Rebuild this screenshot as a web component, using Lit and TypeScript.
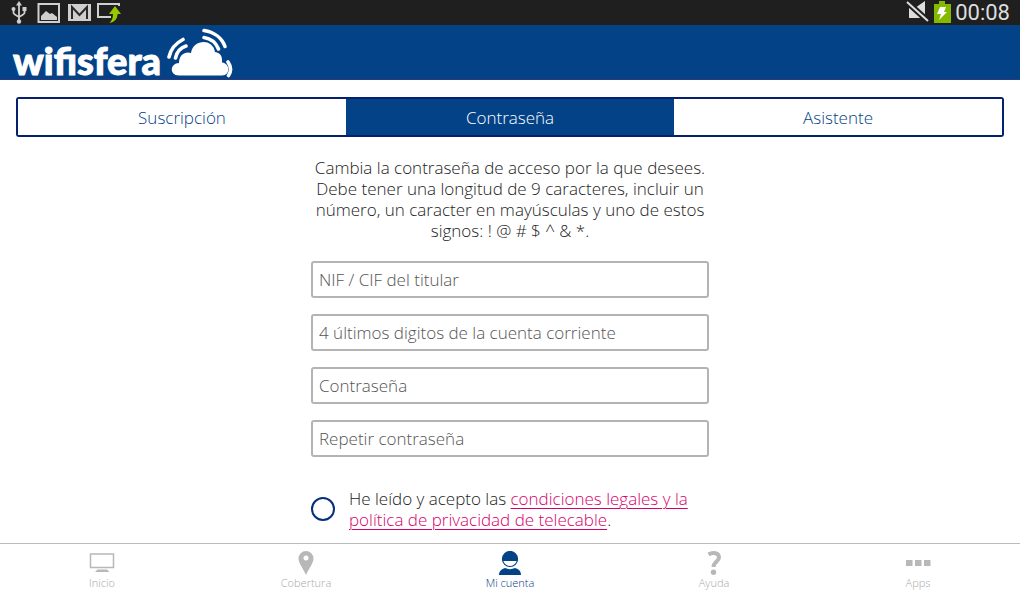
import { LitElement, html, css, svg } from "lit";
import { customElement, state } from "lit/decorators.js";
import { classMap } from "lit/directives/class-map.js";

const icons = {
  inicio: svg`<path fill="none" stroke="currentColor" stroke-width="1.500" d="M2.500 3h23v13.500h-23z"/><path d="M9.500 18.500h9.500l2.500 2.500H7z" fill="currentColor"/>`,
  cobertura: svg`<path fill="currentColor" fill-rule="evenodd" d="M14 0a7.500 7.500 0 0 1 7.500 7.500C21.500 12 17 17.500 14 24C11 17.500 6.500 12 6.500 7.500A7.500 7.500 0 0 1 14 0zM14 4.500a2.500 2.500 0 1 0 0 5a2.500 2.500 0 1 0 0-5z"/>`,
  cuenta: svg`<circle cx="14" cy="8" r="7.500" fill="none" stroke="currentColor" stroke-width="1.200"/><path fill="currentColor" d="M6.500 10V8a7.500 7.500 0 0 1 15 0v2zM3 24c0-3.500 2.500-6 6-7c3 1.500 7 1.500 10 0c4 1 6 3.500 6 7z"/><path fill="#fff" d="M8.500 10h11c-.8 6-10.200 6-11 0z"/>`,
  ayuda: svg`<path fill="none" stroke="currentColor" stroke-width="4" d="M8.500 3.500C13 .8 19 2 19 6.500c0 4-5.500 4-5.500 9.500"/><circle cx="13.500" cy="21.300" r="2.700" fill="currentColor"/>`,
  apps: svg`<path fill="currentColor" d="M2 9h6.500v6H2zM11 9h6.500v6H11zM20 9h6.500v6H20z"/>`,
};

@customElement("status-bar")
class StatusBar extends LitElement {
  static styles = css`
    :host { display: flex; justify-content: space-between; height: 25px; padding: 0 10px; background: #1f1f1f; }
    svg { display: block; }
    .side { display: flex; align-items: center; }
    .time { margin-left: 4px; font: 22px/25px Roboto, sans-serif; color: #ddd; }
  `;
  render() {
    return html`
      <div class="side">
        <svg width="112" height="25" aria-hidden="true">
          <path fill="none" stroke="#cfcfcf" stroke-width="1.800" d="M9 4v18M3.500 9v4q0 1 5.500 4M14.500 9v4q0 1-5.500 4"/>
          <path fill="#cfcfcf" d="M9 1l3 4.500H6zM12.500 7h4v4h-4z"/>
          <circle cx="3.500" cy="9" r="2" fill="#cfcfcf"/><circle cx="9" cy="21.500" r="2.200" fill="#cfcfcf"/>
          <rect x="28.500" y="4" width="20.500" height="18" fill="none" stroke="#cfcfcf" stroke-width="2"/>
          <path fill="#cfcfcf" d="M31 20v-4l5-5 4 3 2-1 5 4v3z"/>
          <path fill="#cfcfcf" d="M58 4h23v17H58z"/>
          <path fill="none" stroke="#2a2a2a" stroke-width="2" d="M62 19V7l7.500 8L77 7v12"/>
          <path fill="none" stroke="#cfcfcf" stroke-width="2" d="M101 17H88V4h21v2"/>
          <path fill="#96c800" d="M105 6l6 8h-3.500c0 5-3 8-8 9c2.500-2.500 3.500-5 3.500-9H99z"/>
        </svg>
      </div>
      <div class="side">
        <svg width="46" height="25" aria-hidden="true">
          <path fill="#ddd" d="M4 8h6l10-7v17H4z"/>
          <path stroke="#1f1f1f" stroke-width="6" d="M2 2l21 19"/>
          <path stroke="#ddd" stroke-width="2" d="M2 2l21 19"/>
          <path fill="#84b900" d="M29 4h5V1h6v3h6v19H29z"/>
          <path fill="#fff" d="M35 7h6l-2 5h3l-8 8 2-6h-4z"/>
        </svg>
        <time class="time">00:08</time>
      </div>`;
  }
}

@customElement("brand-header")
class BrandHeader extends LitElement {
  static styles = css`
    :host { display: flex; align-items: center; gap: 6px; box-sizing: border-box; height: 55px; padding: 0 13px; background: #044288; border-bottom: 1px solid #2b3a7c; color: #fff; }
    .name { padding-top: 16px; font: 900 38px/38px Lato, sans-serif; -webkit-text-stroke: 1px #fff; }
    svg { display: block; }
  `;
  render() {
    return html`
      <span class="name">wifisfera</span>
      <svg width="68" height="52" viewBox="0 0 68 52" aria-hidden="true">
        <path fill="currentColor" d="M12 49.500C2 49.500 3 37 12 37C12 28 19 25 24 27C26 13 46 12 48 26C54 27 55.500 31 55 36.500C63 37 64 49.500 55 49.500z"/>
        <g fill="none" stroke="currentColor" stroke-width="3.600" stroke-linecap="round">
          <path d="M2 31C4 22 9 17 16 13.500M8.500 32C10 25.500 14 21.500 19 20"/>
          <path d="M37 4.500C47 6 55 12 58 20.500M37 11.500C44 12.500 49 17 51.500 23"/>
          <path d="M61 36C64.500 41 64.500 45 61.500 49.500"/>
        </g>
      </svg>`;
  }
}

@customElement("option-tabs")
class OptionTabs extends LitElement {
  @state() selected = 1;
  static styles = css`
    :host { display: block; padding: 17px 16px 0; }
    .tabs { display: grid; grid-template-columns: repeat(3, 1fr); box-sizing: border-box; height: 40px; border: 2px solid #04206e; border-radius: 3px; }
    .tab { border: 0; padding: 0; background: #fff; color: #044288; font: 300 17px/21px "Open Sans", sans-serif; }
    .selected { background: #044288; color: #fff; }
  `;
  render() {
    return html`<div class="tabs" role="tablist">
      ${["Suscripción", "Contraseña", "Asistente"].map((label, i) => html`
        <button class=${classMap({ tab: true, selected: i === this.selected })} role="tab"
          aria-selected=${i === this.selected} @click=${() => (this.selected = i)}>${label}</button>`)}
    </div>`;
  }
}

@customElement("password-form")
class PasswordForm extends LitElement {
  static styles = css`
    :host { display: block; padding: 0 16px; font: 300 17px/21px "Open Sans", sans-serif; color: #222; }
    .form { display: flex; flex-direction: column; gap: 16px; max-width: 398px; margin: 0 auto; }
    .intro { margin: 20px 0 4px; text-align: center; }
    .field { box-sizing: border-box; width: 100%; height: 37px; padding: 0 6px; border: 2px solid #b4b4b4; border-radius: 3px; background: #fff; font: inherit; color: #222; }
    .field::placeholder { color: #555; opacity: 1; }
    .terms { display: flex; align-items: center; gap: 14px; padding-top: 15px; }
    .check { appearance: none; flex: none; width: 24px; height: 24px; margin: 0; border: 2px solid #04307c; border-radius: 50%; background: #fff; }
    .check:checked { background: #04307c; }
    .link { color: #d6006c; text-underline-offset: 3px; text-decoration-thickness: 1px; }
  `;
  render() {
    const fields = [
      ["NIF / CIF del titular", "text"],
      ["4 últimos digitos de la cuenta corriente", "text"],
      ["Contraseña", "password"],
      ["Repetir contraseña", "password"],
    ];
    return html`<form class="form">
      <p class="intro">Cambia la contraseña de acceso por la que desees. Debe tener una longitud de 9 caracteres, incluir un número, un caracter en mayúsculas y uno de estos signos: ! @ # $ ^ &amp; *.</p>
      ${fields.map(([label, type]) => html`<input class="field" type=${type} placeholder=${label} aria-label=${label} autocomplete="off">`)}
      <div class="terms">
        <input class="check" type="checkbox" id="terms">
        <label for="terms">He leído y acepto las <a class="link" href="#legal">condiciones legales y la política de privacidad de telecable</a>.</label>
      </div>
    </form>`;
  }
}

@customElement("bottom-nav")
class BottomNav extends LitElement {
  static styles = css`
    :host { display: block; border-top: 1px solid #bbb; background: #fff; }
    .nav { display: grid; grid-template-columns: repeat(5, 1fr); height: 54px; }
    .item { display: flex; flex-direction: column; align-items: center; padding-top: 7px; color: #a8a8a8; text-decoration: none; font: 300 11px/16px "Open Sans", sans-serif; }
    .active, .active svg { color: #044288; }
    svg { display: block; color: #b8b8b8; }
  `;
  render() {
    const items = [
      ["Inicio", icons.inicio],
      ["Cobertura", icons.cobertura],
      ["Mi cuenta", icons.cuenta],
      ["Ayuda", icons.ayuda],
      ["Apps", icons.apps],
    ] as const;
    return html`<nav class="nav">${items.map(([label, icon], i) => html`
      <a class=${classMap({ item: true, active: i === 2 })} href="#${i}">
        <svg width="28" height="24" viewBox="0 0 28 24" aria-hidden="true">${icon}</svg>${label}
      </a>`)}</nav>`;
  }
}

@customElement("app-root")
class AppRoot extends LitElement {
  static styles = css`
    :host { display: flex; flex-direction: column; min-height: 100vh; background: #fff; }
    .main { flex: 1; }
  `;
  render() {
    return html`
      <status-bar></status-bar>
      <brand-header></brand-header>
      <main class="main">
        <option-tabs></option-tabs>
        <password-form></password-form>
      </main>
      <bottom-nav></bottom-nav>`;
  }
}
